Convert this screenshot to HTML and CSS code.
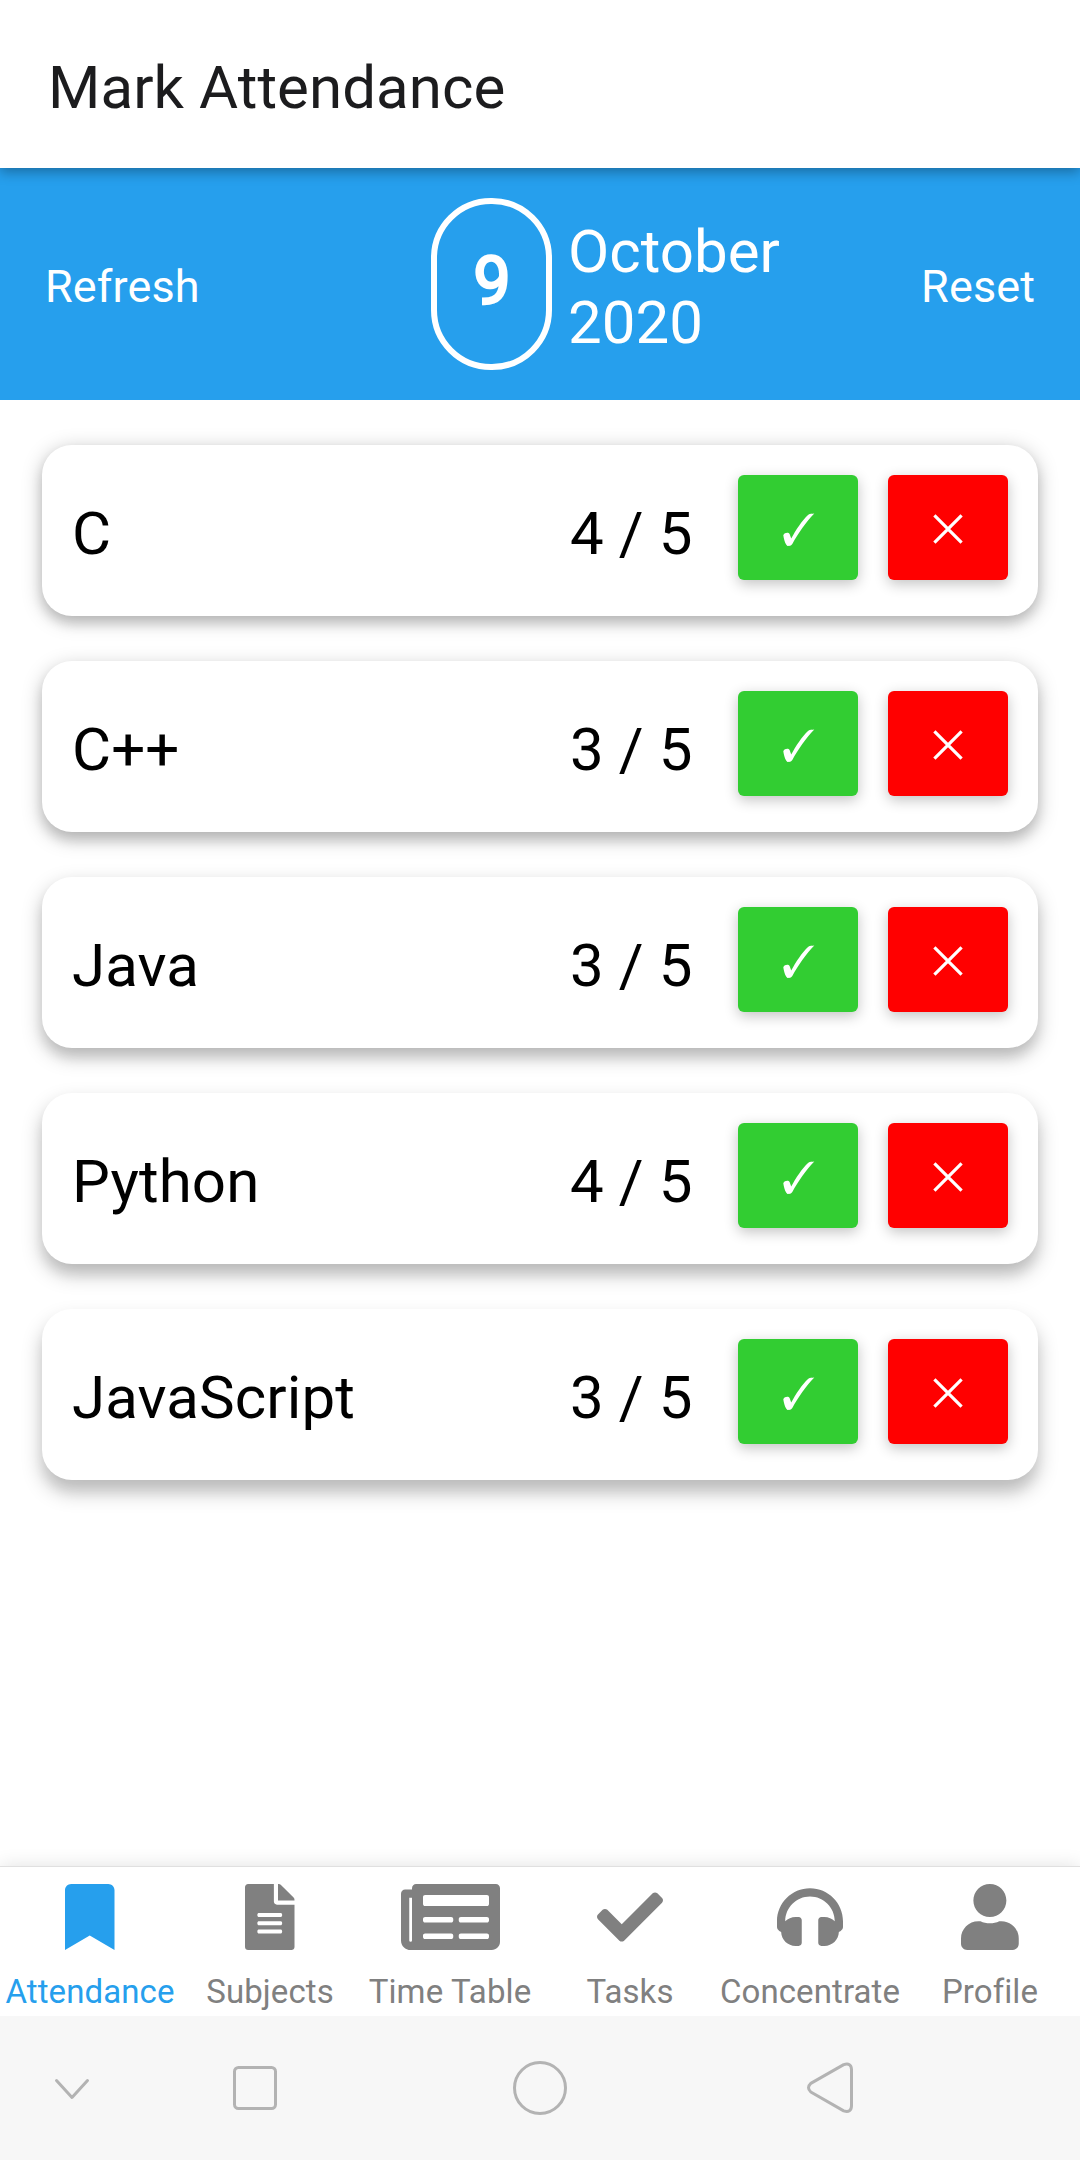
FILE: index.html
```html
<!DOCTYPE html>
<html lang="en">
<head>
<meta charset="utf-8">
<title>Mark Attendance</title>
<link rel="stylesheet" href="styles.css">
</head>
<body>
<svg class="defs" width="0" height="0" aria-hidden="true">
  <symbol id="tick" viewBox="0 0 32 34"><path d="M0.3 22.2C1.7 19.6 5.5 19 6.7 21.3L8.2 25.6C12.8 17 19 7.5 25.3 1.7C27 .5 29 .9 31.3 .6C23 9 15.5 20 9.3 31.1C8 33.5 4.3 33.5 3.3 31.8C1.6 29 .8 25.5 .3 22.2Z"/></symbol>
  <symbol id="cross" viewBox="0 0 30 30"><path d="M1.4 1.4L28.6 28.6M28.6 1.4L1.4 28.6" fill="none" stroke="currentColor" stroke-width="3.2"/></symbol>
</svg>
<div class="screen">
  <header class="titlebar"><h1>Mark Attendance</h1></header>
  <section class="datebar">
    <span class="action">Refresh</span>
    <div class="date"><div class="day">9</div><div class="month">October<br>2020</div></div>
    <span class="action action-end">Reset</span>
  </section>
  <main class="list">
    <article class="card"><span class="name">C</span><span class="count">4 / 5</span><button class="btn yes" aria-label="Present"><svg class="tick"><use href="#tick"/></svg></button><button class="btn no" aria-label="Absent"><svg class="cross"><use href="#cross"/></svg></button></article>
    <article class="card"><span class="name">C++</span><span class="count">3 / 5</span><button class="btn yes" aria-label="Present"><svg class="tick"><use href="#tick"/></svg></button><button class="btn no" aria-label="Absent"><svg class="cross"><use href="#cross"/></svg></button></article>
    <article class="card"><span class="name">Java</span><span class="count">3 / 5</span><button class="btn yes" aria-label="Present"><svg class="tick"><use href="#tick"/></svg></button><button class="btn no" aria-label="Absent"><svg class="cross"><use href="#cross"/></svg></button></article>
    <article class="card"><span class="name">Python</span><span class="count">4 / 5</span><button class="btn yes" aria-label="Present"><svg class="tick"><use href="#tick"/></svg></button><button class="btn no" aria-label="Absent"><svg class="cross"><use href="#cross"/></svg></button></article>
    <article class="card"><span class="name">JavaScript</span><span class="count">3 / 5</span><button class="btn yes" aria-label="Present"><svg class="tick"><use href="#tick"/></svg></button><button class="btn no" aria-label="Absent"><svg class="cross"><use href="#cross"/></svg></button></article>
  </main>
  <nav class="tabs">
    <a class="tab active"><svg width="49.5" height="66" viewBox="0 0 384 512"><path d="M0 512V48C0 21.49 21.49 0 48 0h288c26.51 0 48 21.49 48 48v464L192 400 0 512z"/></svg><span>Attendance</span></a>
    <a class="tab"><svg width="49.5" height="66" viewBox="0 0 384 512"><path d="M224 136V0H24C10.7 0 0 10.7 0 24v464c0 13.3 10.7 24 24 24h336c13.3 0 24-10.7 24-24V160H248c-13.2 0-24-10.8-24-24zm64 236c0 6.6-5.4 12-12 12H108c-6.6 0-12-5.4-12-12v-8c0-6.6 5.4-12 12-12h168c6.6 0 12 5.4 12 12v8zm0-64c0 6.6-5.4 12-12 12H108c-6.6 0-12-5.4-12-12v-8c0-6.6 5.4-12 12-12h168c6.6 0 12 5.4 12 12v8zm0-72v8c0 6.6-5.4 12-12 12H108c-6.6 0-12-5.4-12-12v-8c0-6.6 5.4-12 12-12h168c6.6 0 12 5.4 12 12zm96-114.1v6.1H256V0h6.1c6.4 0 12.5 2.5 17 7l97.9 98c4.5 4.5 7 10.6 7 16.9z"/></svg><span>Subjects</span></a>
    <a class="tab"><svg width="99" height="66" viewBox="0 64 576 384"><path d="M552 64H88c-13.255 0-24 10.745-24 24v8H24c-13.255 0-24 10.745-24 24v272c0 30.928 25.072 56 56 56h472c26.51 0 48-21.49 48-48V88c0-13.255-10.745-24-24-24zM56 400a8 8 0 0 1-8-8V144h16v248a8 8 0 0 1-8 8zm236-16H140c-6.627 0-12-5.373-12-12v-8c0-6.627 5.373-12 12-12h152c6.627 0 12 5.373 12 12v8c0 6.627-5.373 12-12 12zm208 0H348c-6.627 0-12-5.373-12-12v-8c0-6.627 5.373-12 12-12h152c6.627 0 12 5.373 12 12v8c0 6.627-5.373 12-12 12zm-208-96H140c-6.627 0-12-5.373-12-12v-8c0-6.627 5.373-12 12-12h152c6.627 0 12 5.373 12 12v8c0 6.627-5.373 12-12 12zm208 0H348c-6.627 0-12-5.373-12-12v-8c0-6.627 5.373-12 12-12h152c6.627 0 12 5.373 12 12v8c0 6.627-5.373 12-12 12zm0-96H140c-6.627 0-12-5.373-12-12v-40c0-6.627 5.373-12 12-12h360c6.627 0 12 5.373 12 12v40c0 6.627-5.373 12-12 12z"/></svg><span>Time Table</span></a>
    <a class="tab"><svg width="66" height="66" viewBox="0 0 512 512"><path d="M173.898 439.404l-166.4-166.4c-9.997-9.997-9.997-26.206 0-36.204l36.203-36.204c9.997-9.998 26.207-9.998 36.204 0L192 312.69 432.095 72.596c9.997-9.997 26.207-9.997 36.204 0l36.203 36.204c9.997 9.997 9.997 26.206 0 36.204l-294.4 294.401c-9.998 9.997-26.207 9.997-36.204-.001z"/></svg><span>Tasks</span></a>
    <a class="tab"><svg width="66" height="66" viewBox="0 0 512 512"><path d="M256 32C114.52 32 0 146.497 0 288v48a32 32 0 0 0 17.689 28.622l14.383 7.191C34.083 431.903 83.421 480 144 480h24c13.255 0 24-10.745 24-24V280c0-13.255-10.745-24-24-24h-24c-31.342 0-59.671 12.879-80 33.627V288c0-105.869 86.131-192 192-192s192 86.131 192 192v1.627C427.671 268.879 399.342 256 368 256h-24c-13.255 0-24 10.745-24 24v176c0 13.255 10.745 24 24 24h24c60.579 0 109.917-48.098 111.928-108.187l14.382-7.191A32 32 0 0 0 512 336v-48c0-141.479-114.496-256-256-256z"/></svg><span>Concentrate</span></a>
    <a class="tab"><svg width="57.75" height="66" viewBox="0 0 448 512"><path d="M224 256c70.7 0 128-57.3 128-128S294.7 0 224 0 96 57.3 96 128s57.3 128 128 128zm89.6 32h-16.7c-22.2 10.2-46.9 16-72.9 16s-50.6-5.8-72.9-16h-16.7C60.2 288 0 348.2 0 422.4V464c0 26.5 21.5 48 48 48h352c26.5 0 48-21.5 48-48v-41.6c0-74.2-60.2-134.4-134.4-134.4z"/></svg><span>Profile</span></a>
  </nav>
  <footer class="system">
    <svg width="60" height="60"><path d="M14.5 22.5L30 39.5L45.5 22.5"/></svg>
    <svg width="60" height="60"><rect x="9.5" y="9.5" width="41" height="41" rx="4"/></svg>
    <svg width="60" height="60"><circle cx="30" cy="30" r="25.5"/></svg>
    <svg width="60" height="60"><path d="M42.7 6.6L9.8 25.4Q5.2 29.7 9.8 34L42.7 52.9Q50.2 55.2 50.5 48V11.5Q50.2 4.3 42.7 6.6Z"/></svg>
  </footer>
</div>
</body>
</html>
```
FILE: styles.css
```css
* { box-sizing: border-box; }
body { margin: 0; background: #fff; font-family: Roboto, sans-serif; color: #000; }
.defs { position: absolute; }
.screen { display: flex; flex-direction: column; width: 1080px; height: 2160px; overflow: hidden; }
.titlebar { position: relative; z-index: 1; height: 168px; padding: 8px 0 0 48px; display: flex; align-items: center; background: #fff; box-shadow: 0 4px 12px rgba(0, 0, 0, .32); }
h1 { margin: 0; font-size: 60px; font-weight: 400; line-height: 70px; letter-spacing: .07px; color: #1c1c1e; }
.datebar { height: 232px; padding: 0 45px; display: grid; grid-template-columns: 386px 1fr 150px; align-items: center; background: #269fed; color: #fff; }
.action { padding-top: 4px; font-size: 45px; line-height: 53px; letter-spacing: .1px; }
.action-end { text-align: right; }
.date { display: flex; align-items: center; gap: 16px; }
.day { width: 121px; height: 172px; padding: 0 0 6px 1px; display: flex; align-items: center; justify-content: center; border: 6px solid #fff; border-radius: 60px; font-size: 66px; -webkit-text-stroke: 2.6px #fff; }
.month { padding-top: 5px; font-size: 60px; line-height: 71px; }
.list { flex: 1; padding: 45px 42px 0; display: flex; flex-direction: column; gap: 45px; }
.card { height: 171px; padding: 30px; display: flex; align-items: flex-start; border-radius: 30px; background: #fff; box-shadow: 0 4px 20px rgba(0, 0, 0, .25), 0 8px 12px rgba(0, 0, 0, .12); }
.card:nth-child(2) { box-shadow: 0 6px 20px rgba(0, 0, 0, .25), 0 9px 12px rgba(0, 0, 0, .11); }
.card:nth-child(3) { box-shadow: 0 8px 20px rgba(0, 0, 0, .25), 0 10px 12px rgba(0, 0, 0, .08); }
.card:nth-child(4) { box-shadow: 0 10px 20px rgba(0, 0, 0, .25), 0 11px 12px rgba(0, 0, 0, .06); }
.card:nth-child(5) { box-shadow: 0 12px 20px rgba(0, 0, 0, .25), 0 12px 12px rgba(0, 0, 0, .04); }
.name, .count { padding-top: 24px; font-size: 60px; line-height: 70px; letter-spacing: .12px; }
.name { flex: 1; }
.count { margin-right: 45.5px; }
.btn { width: 120px; height: 105px; padding: 0; border: 0; border-radius: 6px; display: flex; align-items: center; justify-content: center; color: #fff; fill: currentColor; box-shadow: 0 4px 14px rgba(0, 0, 0, .24); }
.yes { margin-right: 30px; background: #32cd32; }
.no { background: #f00; }
.tick { width: 32px; height: 34px; margin: 4px 0 0 1px; }
.cross { width: 30px; height: 30px; margin-top: 2px; }
.tabs { height: 150px; padding-top: 17px; display: grid; grid-template-columns: repeat(6, 180px); border-top: 1px solid #e0e0e0; background: #fff; box-shadow: 0 0 18px rgba(0, 0, 0, .12); }
.tab { display: flex; flex-direction: column; align-items: center; gap: 22px; color: #808080; fill: currentColor; font-size: 33px; line-height: 39px; letter-spacing: .1px; white-space: nowrap; }
.tab.active { color: #269fed; }
.system { height: 144px; display: grid; grid-template-columns: 144px 222px 348px 234px; place-items: center; background: #f7f7f7; fill: none; stroke: #b3b3b3; stroke-width: 3; stroke-linecap: round; stroke-linejoin: round; position: relative; }
```
